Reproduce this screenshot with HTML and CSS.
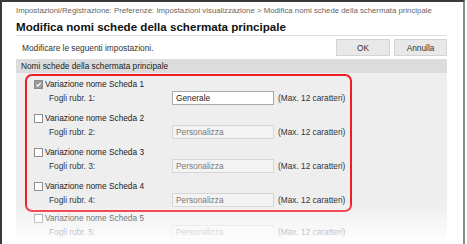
FILE: index.html
```html
<!DOCTYPE html>
<html lang="it">
<head>
<meta charset="utf-8">
<link rel="stylesheet" href="styles.css">
</head>
<body>
<div class="frame">
  <div class="breadcrumb">Impostazioni/Registrazione: Preferenze: Impostazioni visualizzazione &gt; Modifica nomi schede della schermata principale</div>
  <h1 class="title">Modifica nomi schede della schermata principale</h1>
  <div class="toolbar">
    <span class="hint">Modificare le seguenti impostazioni.</span>
    <div class="buttons">
      <button class="btn ok">OK</button>
      <button class="btn cancel">Annulla</button>
    </div>
  </div>
  <div class="section">
    <div class="section-head">Nomi schede della schermata principale</div>
    <div class="section-body">
      <div class="highlight">
        <div class="group">
          <label class="check-row"><span class="cb checked"><svg viewBox="0 0 9 9" width="9" height="9"><path d="M1.8 4.6 L3.7 6.5 L7.3 2.4" fill="none" stroke="#ffffff" stroke-width="1.6"/></svg></span>Variazione nome Scheda 1</label>
          <div class="field-row"><span class="field-label">Fogli rubr. 1:</span><span class="input">Generale</span><span class="max">(Max. 12 caratteri)</span></div>
        </div>
        <div class="group">
          <label class="check-row"><span class="cb"></span>Variazione nome Scheda 2</label>
          <div class="field-row"><span class="field-label">Fogli rubr. 2:</span><span class="input disabled">Personalizza</span><span class="max">(Max. 12 caratteri)</span></div>
        </div>
        <div class="group">
          <label class="check-row"><span class="cb"></span>Variazione nome Scheda 3</label>
          <div class="field-row"><span class="field-label">Fogli rubr. 3:</span><span class="input disabled">Personalizza</span><span class="max">(Max. 12 caratteri)</span></div>
        </div>
        <div class="group">
          <label class="check-row"><span class="cb"></span>Variazione nome Scheda 4</label>
          <div class="field-row"><span class="field-label">Fogli rubr. 4:</span><span class="input disabled">Personalizza</span><span class="max">(Max. 12 caratteri)</span></div>
        </div>
      </div>
      <div class="group outside">
        <label class="check-row"><span class="cb"></span>Variazione nome Scheda 5</label>
        <div class="field-row"><span class="field-label">Fogli rubr. 5:</span><span class="input disabled">Personalizza</span><span class="max">(Max. 12 caratteri)</span></div>
      </div>
    </div>
  </div>
  <div class="fade"></div>
</div>
</body>
</html>
```

FILE: styles.css
```css
* { box-sizing: border-box; }
html, body { margin: 0; padding: 0; background: #ffffff; }
body {
  font-family: "Liberation Sans", Arial, sans-serif;
  width: 467px;
  height: 244px;
  overflow: hidden;
}
.frame {
  position: relative;
  width: 465px;
  height: 244px;
  border-left: 2px solid #3a3a3a;
  border-top: 2px solid #3a3a3a;
  border-right: 2px solid #8a8a8a;
  padding: 0 16px 0 14px;
  overflow: hidden;
}
.breadcrumb {
  font-size: 7.8px;
  line-height: 12px;
  padding-top: 3px;
  color: #666666;
  white-space: nowrap;
}
.title {
  margin: 2px 0 0 0;
  font-size: 11.6px;
  line-height: 16px;
  height: 17px;
  font-weight: bold;
  color: #111111;
  border-bottom: 1px solid #dddddd;
  white-space: nowrap;
}
.toolbar {
  display: flex;
  align-items: center;
  justify-content: space-between;
  height: 24px;
  padding: 0 0 0 6px;
  border-bottom: 1px solid #dddddd;
}
.hint { font-size: 8.3px; color: #333333; }
.buttons { display: flex; gap: 4px; }
.btn {
  font-family: inherit;
  font-size: 8.3px;
  color: #333333;
  height: 17px;
  background: #e8e8e8;
  border: 1px solid #d4d4d4;
  border-radius: 0;
  padding: 0;
}
.ok { width: 54px; }
.cancel { width: 53px; }
.section-head {
  background: #dcdcdc;
  height: 13px;
  line-height: 13px;
  font-size: 8.3px;
  color: #222222;
  padding-left: 5px;
}
.section-body {
  background: #eeeeee;
  height: 200px;
  padding-top: 1px;
}
.highlight {
  margin-left: 9px;
  width: 327px;
  border: 2px solid #ee1c25;
  border-radius: 7px;
  padding: 2px 0 2px 7px;
  display: flex;
  flex-direction: column;
  gap: 6px;
}
.group { display: flex; flex-direction: column; }
.group.outside { padding-left: 18px; }
.check-row {
  display: flex;
  align-items: center;
  height: 12px;
  font-size: 8.3px;
  color: #222222;
}
.cb {
  width: 9px;
  height: 9px;
  border: 1px solid #8f8f8f;
  background: #ffffff;
  margin-right: 2px;
  display: inline-flex;
  align-items: center;
  justify-content: center;
  flex: none;
}
.cb svg { display: block; }
.cb.checked { background: #9a9a9a; border-color: #8a8a8a; }
.field-row {
  display: flex;
  align-items: center;
  height: 16px;
  font-size: 8.3px;
  color: #333333;
}
.field-label { width: 138px; padding-left: 15px; }
.input {
  width: 102px;
  height: 14px;
  line-height: 12px;
  border: 1px solid #a9a9a9;
  background: #ffffff;
  padding-left: 3px;
  color: #222222;
}
.input.disabled {
  background: #f3f3f3;
  border-color: #d6d6d6;
  color: #7a7a7a;
}
.max { margin-left: 4px; color: #333333; white-space: nowrap; }
.fade {
  position: absolute;
  left: -2px;
  right: -2px;
  bottom: 0;
  height: 42px;
  background: linear-gradient(to bottom, rgba(255,255,255,0), rgba(255,255,255,0.97));
}
```
